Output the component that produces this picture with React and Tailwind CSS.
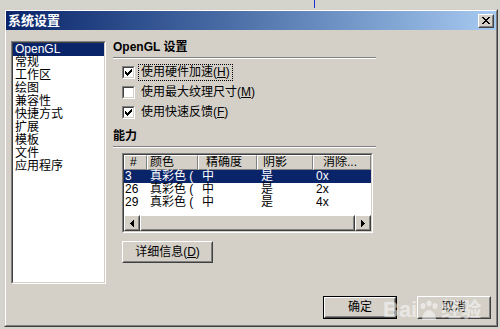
import React from 'react';

const FONT = { fontFamily: '"Liberation Sans", "Noto Sans CJK SC", sans-serif' };

function Raised({ className = '', children }) {
  return (
    <div className={`border border-t-white border-l-white border-r-[#404040] border-b-[#404040] bg-[#d4d0c8] ${className}`}>
      <div className="w-full h-full border border-t-[#d4d0c8] border-l-[#d4d0c8] border-r-[#808080] border-b-[#808080] flex items-center justify-center">
        {children}
      </div>
    </div>
  );
}

function Sunken({ className = '', innerClass = '', children }) {
  return (
    <div className={`border border-t-[#808080] border-l-[#808080] border-r-white border-b-white ${className}`}>
      <div className={`w-full h-full border border-t-[#404040] border-l-[#404040] border-r-[#d4d0c8] border-b-[#d4d0c8] bg-white ${innerClass}`}>
        {children}
      </div>
    </div>
  );
}

function Check() {
  return (
    <svg width="7" height="7" viewBox="0 0 7 7" shapeRendering="crispEdges">
      <path
        fill="#000"
        d="M6 0h1v3h-1zM5 1h1v3h-1zM4 2h1v3h-1zM0 2h1v3h-1zM1 3h1v3h-1zM2 4h1v3h-1zM3 3h1v3h-1z"
      />
    </svg>
  );
}

function CheckRow({ checked, label, keyChar, focused }) {
  return (
    <div className="h-[13px] flex items-center">
      <Sunken className="w-[13px] h-[13px] shrink-0" innerClass="flex items-center justify-center">
        {checked && <Check />}
      </Sunken>
      <span
        className={`ml-[5px] px-[1px] text-[12px] leading-[13px] ${focused ? 'outline outline-1 outline-dotted outline-black outline-offset-[1px]' : ''}`}
      >
        {label}(<span className="underline">{keyChar}</span>)
      </span>
    </div>
  );
}

function Arrow({ dir }) {
  return (
    <svg width="4" height="7" viewBox="0 0 4 7" shapeRendering="crispEdges">
      <polygon fill="#000" points={dir === 'left' ? '4,0 4,7 0,3.5' : '0,0 0,7 4,3.5'} />
    </svg>
  );
}

const listItems = ['OpenGL', '常规', '工作区', '绘图', '兼容性', '快捷方式', '扩展', '模板', '文件', '应用程序'];

const columns = [
  { label: '#', w: 'w-[23px]', pl: 'pl-[5px]' },
  { label: '颜色', w: 'w-[51px]', pl: 'pl-[2px]' },
  { label: '精确度', w: 'w-[59px]', pl: 'pl-[7px]' },
  { label: '阴影', w: 'w-[56px]', pl: 'pl-[5px]' },
  { label: '消除...', w: 'flex-1', pl: 'pl-[9px]' },
];

const rows = [
  { n: '3', aa: '0x' },
  { n: '26', aa: '2x' },
  { n: '29', aa: '4x' },
];

export default function App() {
  return (
    <div className="w-[500px] h-[329px] bg-[#d4d3cc] overflow-hidden relative text-black" style={FONT}>
      {/* strip above the dialog */}
      <div className="h-[9px]">
        <div className="ml-[314px] w-px h-[8px] bg-[#1a2ed0]" />
      </div>

      {/* dialog window */}
      <div className="ml-[4px] w-[494px] h-[318px] border border-t-[#d4d0c8] border-l-[#d4d0c8] border-r-[#404040] border-b-[#404040]">
        <div className="w-full h-full border border-t-white border-l-white border-r-[#808080] border-b-[#808080] bg-[#d4d0c8] flex flex-col">
          {/* title bar */}
          <div className="h-[19px] shrink-0 flex items-center justify-between bg-gradient-to-r from-[#0a246a] to-[#a6caf0] pl-[2px] pr-[2px]">
            <span className="text-white font-bold text-[13px] leading-[15px]">系统设置</span>
            <Raised className="w-[16px] h-[14px]">
              <svg width="8" height="7" viewBox="0 0 8 7" shapeRendering="crispEdges">
                <path
                  fill="#000"
                  d="M0 0h2v1h-2zM6 0h2v1h-2zM1 1h2v1h-2zM5 1h2v1h-2zM2 2h4v1h-4zM3 3h2v1h-2zM2 4h4v1h-4zM1 5h2v1h-2zM5 5h2v1h-2zM0 6h2v1h-2zM6 6h2v1h-2z"
                />
              </svg>
            </Raised>
          </div>

          {/* body */}
          <div className="flex-1 flex flex-col">
            <div className="flex pl-[5px] pt-[11px]">
              {/* category list */}
              <Sunken className="w-[95px] h-[243px] shrink-0">
                <div className="flex flex-col">
                  {listItems.map((item, i) => (
                    <div
                      key={item}
                      className={`h-[13px] pl-[2px] text-[12px] leading-[13px] ${i === 0 ? 'bg-[#0a246a] text-white' : ''}`}
                    >
                      {item}
                    </div>
                  ))}
                </div>
              </Sunken>

              {/* settings panel */}
              <div className="ml-[7px] w-[263px]">
                <div className="h-[16px] text-[12px] leading-[13px] font-bold">OpenGL 设置</div>
                <div className="h-[2px] border-t border-b border-t-[#808080] border-b-white" />

                <div className="ml-[9px] mt-[7px] flex flex-col gap-[7px]">
                  <CheckRow checked label="使用硬件加速" keyChar="H" focused />
                  <CheckRow label="使用最大纹理尺寸" keyChar="M" />
                  <CheckRow checked label="使用快速反馈" keyChar="F" />
                </div>

                <div className="mt-[11px] h-[16px] text-[12px] leading-[12px] font-bold">能力</div>
                <div className="h-[2px] border-t border-b border-t-[#808080] border-b-white" />

                {/* capabilities list view */}
                <Sunken className="ml-[9px] mt-[5px] w-[251px] h-[80px]" innerClass="flex flex-col overflow-hidden">
                  <div className="h-[15px] flex shrink-0">
                    {columns.map((c) => (
                      <div
                        key={c.label}
                        className={`${c.w} ${c.pl} h-full border border-t-white border-l-white border-r-[#808080] border-b-[#808080] bg-[#d4d0c8] text-[12px] leading-[13px] overflow-hidden whitespace-nowrap`}
                      >
                        {c.label}
                      </div>
                    ))}
                  </div>
                  {rows.map((r, i) => (
                    <div
                      key={r.n}
                      className={`h-[13px] flex text-[12px] leading-[13px] whitespace-nowrap ${i === 0 ? 'bg-[#0a246a] text-white' : ''}`}
                    >
                      <div className="w-[23px] pl-[1px]">{r.n}</div>
                      <div className="w-[51px] pl-[3px]">真彩色 (</div>
                      <div className="w-[59px] pl-[4px]">中</div>
                      <div className="w-[56px] pl-[4px]">是</div>
                      <div className="flex-1 pl-[3px]">{r.aa}</div>
                    </div>
                  ))}
                  <div className="flex-1" />
                  <div className="h-[16px] flex shrink-0 bg-[#e8e6e0]">
                    <Raised className="w-[16px] h-full">
                      <Arrow dir="left" />
                    </Raised>
                    <Raised className="flex-1 h-full" />
                    <Raised className="w-[16px] h-full">
                      <Arrow dir="right" />
                    </Raised>
                  </div>
                </Sunken>

                <Raised className="ml-[9px] mt-[8px] w-[91px] h-[22px]">
                  <span className="text-[12px] leading-[13px]">
                    详细信息(<span className="underline">D</span>)
                  </span>
                </Raised>
              </div>
            </div>

            {/* dialog buttons */}
            <div className="mt-auto flex justify-end gap-[20px] pr-[5px] pb-[6px]">
              <div className="border border-black">
                <Raised className="w-[72px] h-[21px]">
                  <span className="text-[12px] leading-[13px]">确定</span>
                </Raised>
              </div>
              <Raised className="w-[74px] h-[23px]">
                <span className="text-[12px] leading-[13px]">取消</span>
              </Raised>
            </div>
          </div>
        </div>
      </div>

      {/* faint watermark */}
      <div className="absolute left-[383px] top-[298px] flex items-end text-white/50 pointer-events-none">
        <span className="text-[22px] leading-[24px] font-bold" style={{ fontFamily: '"Liberation Sans", sans-serif' }}>Bai</span>
        <svg width="22" height="22" viewBox="0 0 22 22" className="mx-[1px]">
          <g fill="rgba(255,255,255,0.5)">
            <ellipse cx="5" cy="6" rx="2.5" ry="3" />
            <ellipse cx="11" cy="3.5" rx="2.5" ry="3" />
            <ellipse cx="17" cy="6" rx="2.5" ry="3" />
            <path d="M4 20c0-6 4-10 7-10s7 4 7 10z" />
          </g>
        </svg>
        <span className="text-[20px] leading-[24px] font-bold">经验</span>
      </div>
    </div>
  );
}
